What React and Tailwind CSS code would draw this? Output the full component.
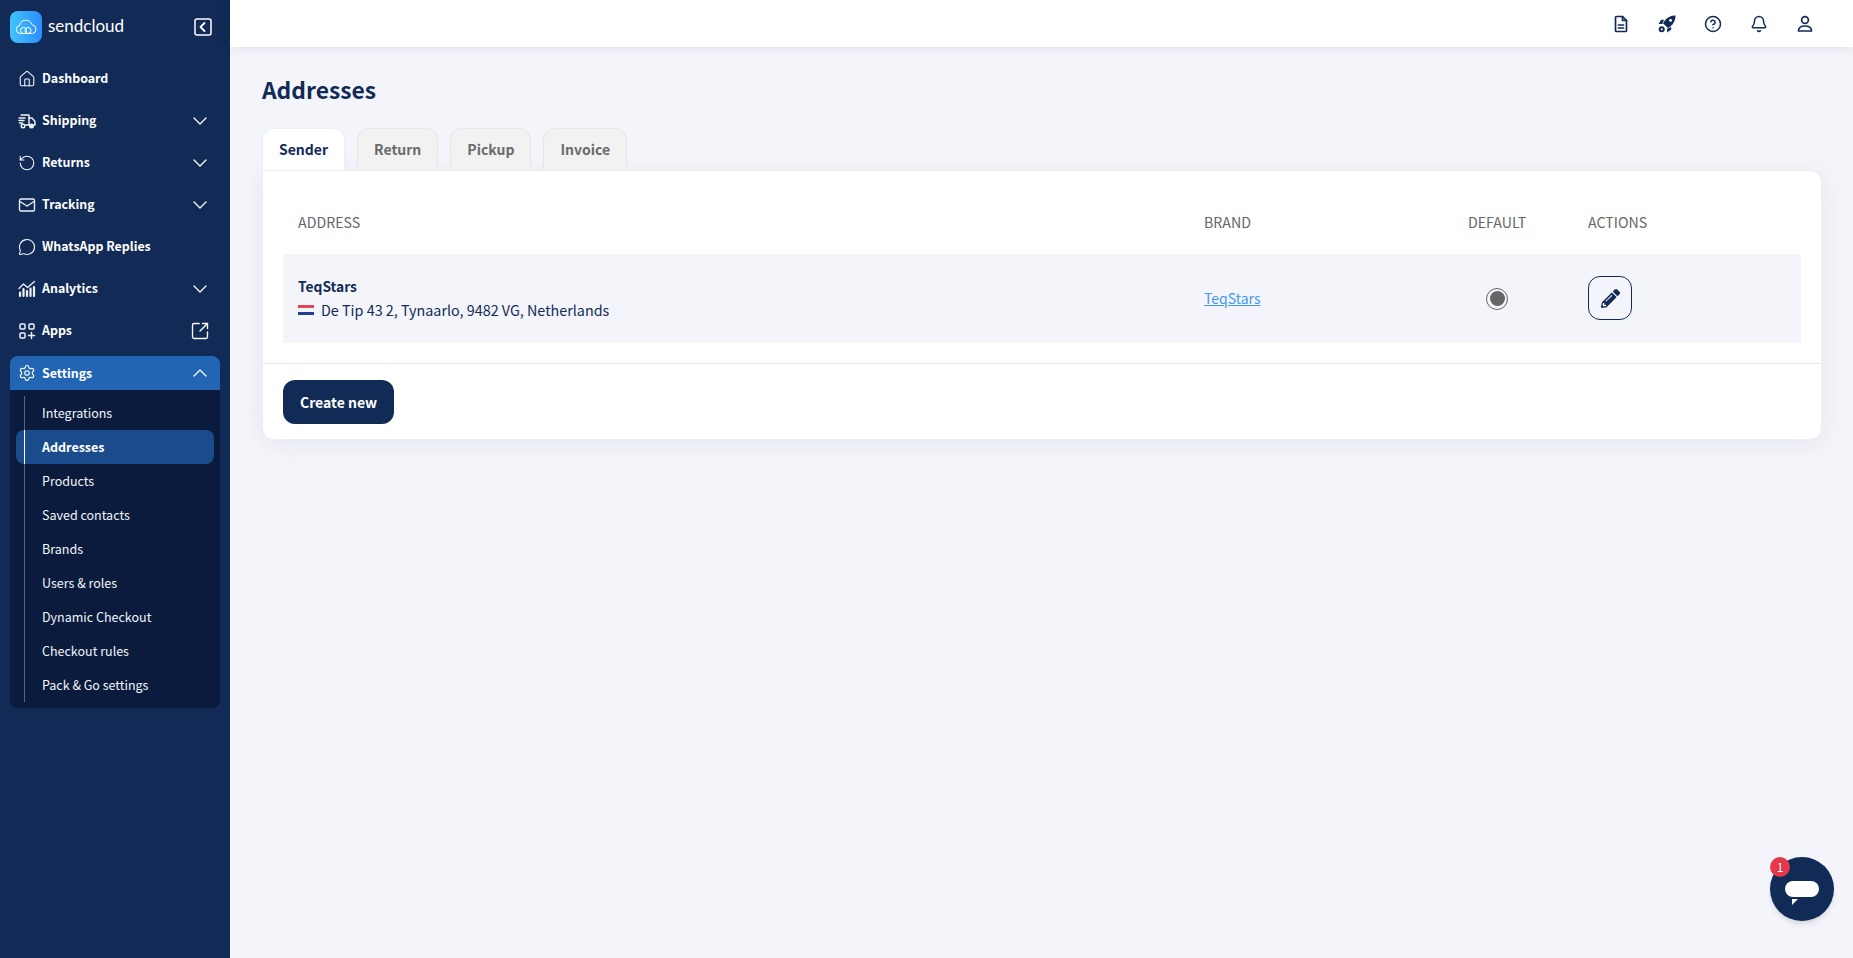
import { ChevronDown, ChevronUp, House, Mail, MessageCircle, RotateCcw, Settings, SquareArrowOutUpRight, CircleHelp, Bell } from 'lucide-react';
import { FaPencilAlt } from 'react-icons/fa';

const font = { fontFamily: '"Noto Sans CJK SC", "Noto Sans", sans-serif' };

function ShippingIcon() {
  return (
    <svg width="18" height="18" viewBox="0 0 18 18" fill="none" stroke="currentColor" strokeWidth="1.4" strokeLinecap="round" strokeLinejoin="round">
      <path d="M3 3h8v10H7.5" />
      <path d="M11 6h3l3 3.5V13h-1.5" />
      <path d="M11 13h1.5" />
      <path d="M1 6h6M1 8.5h5M1.5 11h3" />
      <circle cx="5" cy="14" r="1.8" />
      <circle cx="13.5" cy="14" r="1.8" fill="currentColor" />
    </svg>
  );
}

function AnalyticsIcon() {
  return (
    <svg width="18" height="18" viewBox="0 0 18 18" fill="none" stroke="currentColor" strokeLinecap="round" strokeLinejoin="round">
      <path d="M1 8.5 5.5 4l4 3.5L16.5 1.5" strokeWidth="1.3" />
      <path d="M2 16v-3.5M5.5 16V9M9 16v-5M12.5 16V8.5M16 16V7" strokeWidth="2.2" />
    </svg>
  );
}

function AppsIcon() {
  return (
    <svg width="18" height="18" viewBox="0 0 18 18" fill="none" stroke="currentColor" strokeWidth="1.5" strokeLinecap="round" strokeLinejoin="round">
      <rect x="2" y="2" width="5" height="5" rx="1" />
      <rect x="11" y="2" width="5" height="5" rx="1" />
      <rect x="2" y="11" width="5" height="5" rx="1" />
      <path d="M13.5 10.5v6M10.5 13.5h6" />
    </svg>
  );
}

function DocIcon() {
  return (
    <svg width="18" height="18" viewBox="0 0 18 18" fill="none" stroke="currentColor" strokeWidth="1.7" strokeLinecap="round" strokeLinejoin="round">
      <path d="M4.5 1.5h6l4 4v10a1 1 0 0 1-1 1h-9a1 1 0 0 1-1-1v-13a1 1 0 0 1 1-1Z" />
      <path d="M10.5 1.5v4h4" />
      <path d="M6.5 10h5M6.5 13h5" />
    </svg>
  );
}

function RocketIcon() {
  return (
    <svg width="18" height="18" viewBox="0 0 18 18" fill="currentColor">
      <path d="M17.500.5c-4.500-.2-8.200 1.800-10.900 5.200L5 8.200l4.800 4.800 2.500-1.600C15.700 8.700 17.700 5 17.500.5Z" />
      <path d="M6 4.800H3.200L.5 8.900h3.800Z" />
      <path d="M13.200 12v2.800L9.100 17.500v-3.800Z" />
      <circle cx="12.600" cy="5.400" r="1.400" fill="white" />
      <circle cx="3.700" cy="14.300" r="3" />
      <circle cx="3.700" cy="14.300" r="1" fill="white" />
    </svg>
  );
}

function UserIcon() {
  return (
    <svg width="18" height="18" viewBox="0 0 18 18" fill="none" stroke="currentColor" strokeWidth="1.7" strokeLinecap="round" strokeLinejoin="round">
      <circle cx="9" cy="5" r="3.400" />
      <path d="M2.500 16c0-3.400 2.600-5 6.500-5s6.500 1.600 6.500 5Z" />
    </svg>
  );
}

const navItems = [
  { label: 'Dashboard', icon: <House size={18} strokeWidth={1.5} /> },
  { label: 'Shipping', icon: <ShippingIcon />, arrow: true },
  { label: 'Returns', icon: <RotateCcw size={18} strokeWidth={1.5} />, arrow: true },
  { label: 'Tracking', icon: <Mail size={18} strokeWidth={1.8} />, arrow: true },
  { label: 'WhatsApp Replies', icon: <MessageCircle size={18} strokeWidth={1.5} /> },
  { label: 'Analytics', icon: <AnalyticsIcon />, arrow: true },
  { label: 'Apps', icon: <AppsIcon />, external: true },
];

const subItems = ['Integrations', 'Addresses', 'Products', 'Saved contacts', 'Brands', 'Users & roles', 'Dynamic Checkout', 'Checkout rules', 'Pack & Go settings'];

function Sidebar() {
  return (
    <aside className="w-[230px] shrink-0 bg-[#112a56] text-white min-h-screen">
      <div className="h-[53px] pl-[10px] pr-[18px] pt-[11px] flex items-start justify-between">
        <div className="flex items-center">
          <div className="w-[32px] h-[32px] rounded-lg bg-gradient-to-r from-[#41c4fb] to-[#2f8cfd] flex items-center justify-center">
            <svg width="24" height="18" viewBox="0 0 24 18" fill="none" stroke="white" strokeWidth="1" strokeLinejoin="round">
              <path d="M6 15.500a4 4 0 0 1-.6-7.900A6.500 6.500 0 0 1 18 6.800a4.400 4.400 0 0 1 .5 8.700Z" />
              <path d="M9.500 15.500a3 3 0 1 1 3-3v3" />
              <circle cx="14" cy="12.500" r="3" />
            </svg>
          </div>
          <span className="ml-[6px] text-[17px] leading-[26px] -mt-[3px]" style={{ fontFamily: 'Lato, sans-serif' }}>sendcloud</span>
        </div>
        <svg className="mt-[7px]" width="18" height="18" viewBox="0 0 18 18" fill="none" stroke="white" strokeWidth="1.5" strokeLinecap="round" strokeLinejoin="round">
          <rect x="1" y="1" width="16" height="16" rx="2" />
          <path d="M10.500 5 6.500 9l4 4" strokeWidth="1.800" />
        </svg>
      </div>
      <nav className="px-[10px] pt-[9px]">
        <div className="flex flex-col gap-2">
          {navItems.map(item => (
            <div key={item.label} className="h-[34px] flex items-center pl-[8px] pr-[8px] text-[12.4px] font-semibold">
              <span className="w-[18px] flex justify-center text-[#eef2f8]">{item.icon}</span>
              <span className="ml-[6px] flex-1 -mt-[1px]">{item.label}</span>
              {item.arrow && <ChevronDown size={24} strokeWidth={1.3} />}
              {item.external && <span className="pr-[2px]"><SquareArrowOutUpRight size={20} strokeWidth={1.6} /></span>}
            </div>
          ))}
        </div>
        <div className="mt-[8px] h-[34px] bg-[#2266b3] rounded-t-lg flex items-center pl-[8px] pr-[8px] text-[12.4px] font-semibold">
          <Settings size={18} strokeWidth={1.5} />
          <span className="ml-[6px] flex-1">Settings</span>
          <ChevronUp size={24} strokeWidth={1.3} />
        </div>
        <ul className="bg-[#0a1b3d] rounded-b-lg p-[6px] text-[12.5px] text-[#f3f5f9]">
          {subItems.map(label => {
            const active = label === 'Addresses';
            return (
              <li key={label} className={`h-[34px] flex items-center rounded-lg ${active ? 'bg-[#1a4c8c] font-semibold text-white' : ''}`}>
                <span className={`ml-[8px] mr-[17px] w-px self-stretch ${active ? 'bg-white' : 'bg-[#55657f]'}`} />
                <span>{label}</span>
              </li>
            );
          })}
        </ul>
      </nav>
    </aside>
  );
}

function Topbar() {
  return (
    <header className="h-[47px] bg-white shadow-[0_2px_10px_rgba(17,42,86,0.08)] flex items-center justify-end pr-[39px] gap-[28px] text-[#112a56] relative">
      <DocIcon />
      <RocketIcon />
      <CircleHelp size={18} strokeWidth={2} />
      <Bell size={18} strokeWidth={2} />
      <UserIcon />
    </header>
  );
}

function Tab({ label, active }) {
  return (
    <div className={`h-[42px] px-[16px] rounded-t-xl border border-b-0 flex items-center justify-center text-[14px] font-semibold ${active ? 'bg-white border-[#eceef2] text-[#112a56]' : 'bg-[#f2f2f2] border-[#e6e6e6] text-[#6b6b6b]'}`}>
      <span>{label}</span>
    </div>
  );
}

function Flag() {
  return (
    <span className="w-[16px] h-[11px] flex flex-col overflow-hidden shrink-0">
      <span className="h-1/3 bg-[#e0485a]" />
      <span className="h-1/3 bg-[#f4f4f8]" />
      <span className="h-1/3 bg-[#1d3f8f]" />
    </span>
  );
}

export default function App() {
  return (
    <div className="flex min-h-screen bg-[#f4f5fa] text-[#112a56]" style={font}>
      <Sidebar />
      <div className="flex-1 min-w-0">
        <Topbar />
        <main className="pl-[32px] pr-[31px]">
          <h1 className="pt-[25px] text-[22.8px] leading-[36px] font-semibold">Addresses</h1>
          <div className="mt-[20px] flex gap-[12px]">
            <Tab label="Sender" active />
            <Tab label="Return" />
            <Tab label="Pickup" />
            <Tab label="Invoice" />
          </div>
          <section className="bg-white rounded-b-xl rounded-tr-xl border border-[#eceef2] shadow-[0_4px_24px_rgba(17,42,86,0.07)]">
            <div className="px-[20px] pt-[19px]">
              <div className="grid grid-cols-[906px_264px_120px_1fr] h-[64px] items-center text-[14.2px] text-[#666] pt-[2px]">
                <span className="pl-[15px]">ADDRESS</span>
                <span className="pl-[15px]">BRAND</span>
                <span className="pl-[15px]">DEFAULT</span>
                <span className="pl-[15px]">ACTIONS</span>
              </div>
              <div className="grid grid-cols-[906px_264px_120px_1fr] h-[89px] items-center bg-[#f4f5fa] text-[14.35px]">
                <div className="pl-[15px]">
                  <div className="text-[13.8px] leading-[24px] font-semibold -mt-[1px]">TeqStars</div>
                  <div className="flex items-center leading-[24px]">
                    <Flag />
                    <span className="ml-[7px]">De Tip 43 2, Tynaarlo, 9482 VG, Netherlands</span>
                  </div>
                </div>
                <a href="#" className="pl-[15px] text-[14px] text-[#3f9bf5] underline">TeqStars</a>
                <div className="pl-[33px]">
                  <span className="w-[22px] h-[22px] rounded-full border border-[#666] flex items-center justify-center">
                    <span className="w-[15px] h-[15px] rounded-full bg-[#666]" />
                  </span>
                </div>
                <div className="pl-[15px]">
                  <button className="w-[44px] h-[44px] mb-[1px] rounded-xl border border-[#112a56] flex items-center justify-center">
                    <FaPencilAlt size={19} />
                  </button>
                </div>
              </div>
            </div>
            <div className="mt-[20px] border-t border-[#e6e7ea] px-[20px] pt-[16px] pb-[15px]">
              <button className="h-[44px] px-[17px] rounded-xl bg-[#112a56] text-white text-[14px] font-semibold">
                Create new
              </button>
            </div>
          </section>
        </main>
      </div>
      <div className="fixed left-[1770px] top-[857px] w-[64px] h-[64px] rounded-full bg-[#112a56] shadow-md flex items-center justify-center">
        <span className="w-[34px] h-[16px] rounded-full bg-white -mt-[1px]" />
        <span className="absolute left-[22px] top-[42px] w-0 h-0 border-t-[6px] border-t-white border-r-[6px] border-r-transparent" />
        <span className="absolute left-0 top-0 w-[20px] h-[20px] rounded-full bg-[#e5384b] text-white text-[12px] flex items-center justify-center">1</span>
      </div>
    </div>
  );
}
